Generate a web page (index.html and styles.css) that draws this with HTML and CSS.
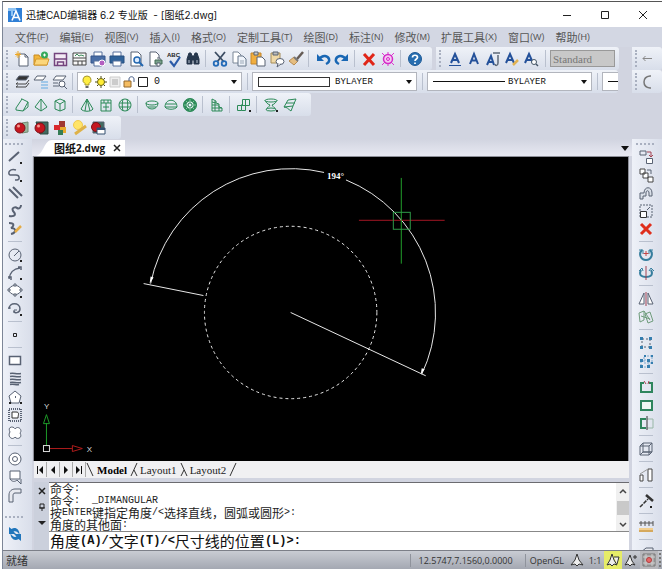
FILE: index.html
```html
<!DOCTYPE html>
<html lang="zh-CN">
<head>
    <meta charset="UTF-8">
    <meta name="viewport" content="width=device-width, initial-scale=1.0">
    <title>迅捷CAD编辑器</title>
    <link rel="stylesheet" href="styles.css">
</head>
<body>
    <div class="app">
        <header class="titlebar">
            <svg class="logo" viewBox="0 0 14 14"><rect width="14" height="14" fill="#2f7fd6"/><path d="M0 0h8v3H5v5H3V3H0z" fill="#8fc4f4"/><path d="M4 12.500L8 3l4 9.500M5.500 9.500h5" fill="none" stroke="#fff" stroke-width="1.600"/></svg>
            <h1>迅捷CAD编辑器 6.2 专业版 &nbsp;- [图纸2.dwg]</h1>
            <div class="window-buttons">
                <button type="button" aria-label="最小化"><svg viewBox="0 0 10 10"><path d="M1 5.500h8"/></svg></button>
                <button type="button" aria-label="最大化"><svg viewBox="0 0 10 10"><path d="M1.500 1.500h7v7h-7z"/></svg></button>
                <button type="button" aria-label="关闭"><svg viewBox="0 0 10 10"><path d="M1 1l8 8M9 1L1 9"/></svg></button>
            </div>
        </header>

        <nav class="menubar">
            <button type="button">文件<small>(F)</small></button>
            <button type="button">编辑<small>(E)</small></button>
            <button type="button">视图<small>(V)</small></button>
            <button type="button">插入<small>(I)</small></button>
            <button type="button">格式<small>(O)</small></button>
            <button type="button">定制工具<small>(T)</small></button>
            <button type="button">绘图<small>(D)</small></button>
            <button type="button">标注<small>(N)</small></button>
            <button type="button">修改<small>(M)</small></button>
            <button type="button">扩展工具<small>(X)</small></button>
            <button type="button">窗口<small>(W)</small></button>
            <button type="button">帮助<small>(H)</small></button>
        </nav>

        <!-- standard toolbar -->
        <div class="toolrow">
            <div class="toolbar standard">
                <i class="grip"></i>
                <button type="button" class="tool" aria-label="新建"><svg viewBox="0 0 18 18"><path d="M6 4h6l3 3v9H6z" fill="#fff"/><path d="M12 4v3h3"/><path d="M5 1v7M2 4.500h6M3 2.500l4 4M7 2.500l-4 4" stroke="#eda723"/></svg></button>
                <button type="button" class="tool" aria-label="打开"><svg viewBox="0 0 18 18"><path d="M2 5h5l1 2h7v8H2z" fill="#f2b63c" stroke="#c88a20"/><path d="M4 9h13l-2 6H2z" fill="#fbd67c" stroke="#d49a30"/><circle cx="12.500" cy="5" r="3.500" fill="#35a95c" stroke="none"/><path d="M11 5h3M12.500 3.500v3" stroke="#fff"/></svg></button>
                <button type="button" class="tool" aria-label="保存"><svg viewBox="0 0 18 18"><path d="M3.500 3.500h12v12h-12z" fill="#f3eaf5" stroke="#73447e" stroke-width="1.500"/><path d="M4 9h11M6.500 15v-3h6v3" stroke="#73447e" stroke-width="1.500"/></svg></button>
                <button type="button" class="tool" aria-label="另存为"><svg viewBox="0 0 18 18"><path d="M3 3h13v12H3z" fill="#f8f8f8" stroke="#444"/><path d="M3 8h13M3 11h13M8 11v4M12 11v4" stroke="#444"/><path d="M5 6l2-2 2 2 2-1 3 1" stroke="#3d8e5c"/></svg></button>
                <button type="button" class="tool" aria-label="打印"><svg viewBox="0 0 18 18"><path d="M5 2h8v5H5z" fill="#fff" stroke="#56719c"/><path d="M2 6h14v7H2z" fill="#496ea6" stroke="#34558a"/><path d="M5 11h8v5H5z" fill="#fff" stroke="#56719c"/><circle cx="13" cy="13" r="3" fill="#b35fc0" stroke="#fff"/></svg></button>
                <button type="button" class="tool" aria-label="快速打印"><svg viewBox="0 0 18 18"><path d="M5 2h8v5H5z" fill="#fff" stroke="#56719c"/><path d="M2 6h14v7H2z" fill="#2f6299" stroke="#274f80"/><path d="M5 11h8v5H5z" fill="#fff" stroke="#56719c"/></svg></button>
                <button type="button" class="tool" aria-label="打印预览"><svg viewBox="0 0 18 18"><path d="M4 2h7l3 3v11H4z" fill="#fff"/><circle cx="10" cy="10" r="3" fill="#dcecff" stroke="#2367b0" stroke-width="1.500"/><path d="M12 12l4 4" stroke="#2367b0" stroke-width="2"/></svg></button>
                <button type="button" class="tool" aria-label="页面设置"><svg viewBox="0 0 18 18"><path d="M4 2h6l3 3v11H4z" fill="#fff"/><path d="M9 10h7v4H9z" fill="#79a08a" stroke="#426a55"/><path d="M11 8h3v2M11 13h3v3h-3z" fill="#fff"/></svg></button>
                <button type="button" class="tool" aria-label="拼写检查"><svg viewBox="0 0 18 18"><text x="2" y="7">ABC</text><path d="M5 11l4 5 6-9" stroke="#2b5ba8" stroke-width="2.200"/></svg></button>
                <button type="button" class="tool" aria-label="查找"><svg viewBox="0 0 18 18"><path d="M5 3h2l1 3h2l1-3h2l2 6v5h-5v-4H8v4H3V9z" fill="#26374d" stroke="#26374d"/><path d="M5 10v3M13 10v3" stroke="#b6c2d0"/></svg></button>
                <i class="sep"></i>
                <button type="button" class="tool" aria-label="剪切"><svg viewBox="0 0 18 18"><path d="M4 2l9 10M14 2L6 12" stroke="#3c4d63" stroke-width="1.800"/><circle cx="5" cy="13.500" r="2.300" stroke="#236bb8" stroke-width="1.800"/><circle cx="13" cy="13.500" r="2.300" stroke="#236bb8" stroke-width="1.800"/></svg></button>
                <button type="button" class="tool" aria-label="复制"><svg viewBox="0 0 18 18"><path d="M3 2h5l3 3v8H3z" fill="#fff" stroke="#7a8797"/><path d="M8 6h5l3 3v7H8z" fill="#eef3fa" stroke="#66768a"/><path d="M10 11h4M10 13h4" stroke="#9aa7b6"/></svg></button>
                <button type="button" class="tool" aria-label="粘贴"><svg viewBox="0 0 18 18"><path d="M2 3h10v11H2z" fill="#f1ae3e" stroke="#c5862a"/><path d="M5 2h4v3H5z" fill="#ccc"/><path d="M8 7h5l3 3v6H8z" fill="#fff"/></svg></button>
                <button type="button" class="tool" aria-label="选择性粘贴"><svg viewBox="0 0 18 18"><path d="M3 3h9v10H3z" fill="#efd8a6" stroke="#a58c58"/><path d="M5 2h5v3H5z" fill="#bbb"/><ellipse cx="12" cy="11.500" rx="4" ry="3" fill="#fff"/><path d="M10 14l-1 3 4-3" fill="#fff"/></svg></button>
                <button type="button" class="tool" aria-label="特性匹配"><svg viewBox="0 0 18 18"><path d="M16 2l-6 7" stroke="#655b55" stroke-width="2.500"/><path d="M7 7l4 4-4 4-5-4z" fill="#e5bd80" stroke="#b88c52"/><path d="M7 7l4 4" stroke="#777" stroke-width="2"/></svg></button>
                <i class="sep"></i>
                <button type="button" class="tool" aria-label="放弃"><svg viewBox="0 0 18 18"><path d="M3 4v7h7z" fill="#1967b4" stroke="none"/><path d="M5 9c4-5 9-3 10 0s-1 4-3 5" stroke="#1967b4" stroke-width="2.500"/></svg></button>
                <button type="button" class="tool" aria-label="重做"><svg viewBox="0 0 18 18"><path d="M15 4v7H8z" fill="#1967b4" stroke="none"/><path d="M13 9C9 4 4 6 3 9s1 4 3 5" stroke="#1967b4" stroke-width="2.500"/></svg></button>
                <i class="sep"></i>
                <button type="button" class="tool" aria-label="删除"><svg viewBox="0 0 18 18"><path d="M4 4l10 11M14 4L4 15" stroke="#e02618" stroke-width="3"/></svg></button>
                <button type="button" class="tool" aria-label="清理"><svg viewBox="0 0 18 18"><path d="M3 3l12 12M15 3L3 15M9 2v14" stroke="#dd35cf"/><circle cx="9" cy="9" r="4.500" fill="#f5c8f2" stroke="#d52bc8" stroke-width="1.500"/><circle cx="9" cy="9" r="1.500" stroke="#d52bc8"/></svg></button>
                <i class="sep"></i>
                <button type="button" class="tool" aria-label="帮助"><svg viewBox="0 0 18 18"><circle cx="9" cy="9" r="6.500" fill="#266db0" stroke="#1d5a97"/><path d="M6.500 7.500c0-3 5-3 5 0 0 1.500-2.500 1.500-2.500 3.500M9 12.500v1.500" stroke="#fff" stroke-width="1.700"/></svg></button>
            </div>
            <div class="toolbar styles">
                <i class="grip"></i>
                <button type="button" class="tool" aria-label="文字样式"><svg viewBox="0 0 18 18"><path d="M5 13L9 4l4 9M6.500 10h5" stroke="#24519a" stroke-width="2"/><path d="M3 15.500h12" stroke="#24519a"/></svg></button>
                <button type="button" class="tool" aria-label="单行文字"><svg viewBox="0 0 18 18"><path d="M5 14L9 4l4 10M6.500 10.500h5" stroke="#24519a" stroke-width="2"/></svg></button>
                <button type="button" class="tool" aria-label="多行文字"><svg viewBox="0 0 18 18"><path d="M3 15L7 6l3 9M4.500 12h5" stroke="#24519a" stroke-width="2"/><path d="M9 3h7M14 5v8c0 3-3 3-3 1" stroke="#5c6878" stroke-width="1.500"/></svg></button>
                <button type="button" class="tool" aria-label="编辑文字"><svg viewBox="0 0 18 18"><path d="M3 13L7 4l4 9M4.500 10h5" stroke="#24519a" stroke-width="2"/><path d="M10 15l5-5" stroke="#e2b352" stroke-width="2.500"/></svg></button>
                <button type="button" class="tool" aria-label="查找文字"><svg viewBox="0 0 18 18"><path d="M3 13L7 4l4 9M4.500 10h5" stroke="#24519a" stroke-width="2"/><circle cx="12" cy="12" r="2.500" fill="#fff" stroke="#456"/><path d="M14 14l2 2" stroke="#456" stroke-width="1.500"/></svg></button>
                <i class="sep wide"></i>
                <select class="style-select" aria-label="样式" disabled><option>Standard</option></select>
            </div>
            <div class="toolbar docked">
                <i class="grip"></i>
                <button type="button" class="tool" aria-label="返回"><svg viewBox="0 0 18 18"><path d="M1 8.500h9M3.500 6L1 8.500 3.500 11" stroke="#888"/></svg></button>
            </div>
        </div>

        <!-- layers and properties -->
        <div class="toolrow">
            <div class="toolbar layers">
                <i class="grip"></i>
                <button type="button" class="tool" aria-label="图层"><svg viewBox="0 0 18 18"><path d="M6 3h10l-3 4H3z" fill="#333"/><path d="M5 9.500L3 11h10l3-4M5 12.500L3 14h10l3-4" stroke="#444"/></svg></button>
                <button type="button" class="tool" aria-label="图层状态"><svg viewBox="0 0 18 18"><path d="M5 3h9l-3 4H2z" fill="#fff"/><path d="M9 9h7M9 12h7M9 15h7" stroke="#8bbde6" stroke-width="1.500"/></svg></button>
                <button type="button" class="tool" aria-label="图层查找"><svg viewBox="0 0 18 18"><path d="M5 3h10l-3 4H2zM2 10h5M2 13h6" fill="#fff"/><circle cx="11" cy="11" r="3" fill="#fff"/><path d="M13 13l3 3"/></svg></button>
                <i class="sep"></i>
                <div class="combo">
                    <svg class="mini" viewBox="0 0 14 14"><path d="M7 1a4 4 0 0 0-2 7.500V10h4V8.500A4 4 0 0 0 7 1z" fill="#ffee42" stroke="#a4952c"/><path d="M5.500 12h3" stroke="#666" stroke-width="2"/></svg>
                    <svg class="mini" viewBox="0 0 14 14"><path d="M7 1v12M1 7h12M3 3l8 8M11 3l-8 8" stroke="#4d4d12"/><circle cx="7" cy="7" r="3.500" fill="#ffed34" stroke="#6d661b"/></svg>
                    <svg class="mini" viewBox="0 0 14 14"><path d="M2 2h10v10H2z" fill="#eee" stroke="#ccc"/><path d="M4 5h6M4 7h6M4 9h6" stroke="#aaa"/></svg>
                    <svg class="mini" viewBox="0 0 14 14"><path d="M2 6h7v6H2z" fill="#f5bd62" stroke="#94682c"/><path d="M7 6V4c0-3 5-3 5 0v3" stroke="#445b86"/></svg>
                    <svg class="mini" viewBox="0 0 14 14"><path d="M2.500 2.500h9v9h-9z" fill="#fff" stroke="#222"/></svg>
                    <select class="layer-name" aria-label="当前图层"><option>0</option></select>
                </div>
                <i class="sep wide"></i>
                <div class="combo">
                    <i class="swatch"></i>
                    <select aria-label="颜色"><option>BYLAYER</option></select>
                </div>
                <i class="sep wide"></i>
                <div class="combo">
                    <i class="linetype"></i>
                    <select aria-label="线型"><option>BYLAYER</option></select>
                </div>
                <i class="sep wide"></i>
                <div class="combo cut"><i class="linetype"></i></div>
            </div>
            <div class="toolbar docked">
                <i class="grip"></i>
                <button type="button" class="tool" aria-label="圆弧"><svg viewBox="0 0 18 18"><path d="M9 3H8C0 4 0 14 8 15h1" stroke="#777" stroke-width="1.500"/></svg></button>
            </div>
        </div>

        <!-- 3D surfaces -->
        <div class="toolrow">
            <div class="toolbar surfaces">
                <i class="grip"></i>
                <button type="button" class="tool" aria-label="楔体"><svg viewBox="0 0 18 18"><path d="M3 12l6-9 6 3-5 9-7-1zM9 3l-1 0M10 15l5-4V6"/></svg></button>
                <button type="button" class="tool" aria-label="棱锥"><svg viewBox="0 0 18 18"><path d="M9 3L3 11l6 4 6-4zM9 3v12"/></svg></button>
                <button type="button" class="tool" aria-label="长方体"><svg viewBox="0 0 18 18"><path d="M9 3l5 2v8l-5 2-5-2V5zM4 5l5 3 5-3M9 8v7"/></svg></button>
                <i class="sep"></i>
                <button type="button" class="tool" aria-label="圆锥"><svg viewBox="0 0 18 18"><path d="M9 3L3 13c2 3 10 3 12 0zM9 3L7 15M9 3l3 12"/></svg></button>
                <button type="button" class="tool" aria-label="圆柱"><svg viewBox="0 0 18 18"><path d="M4 4h10v11H4zM4 7h10M9 7v8M6 11h6M7 4v3M11 4v3"/></svg></button>
                <button type="button" class="tool" aria-label="球体"><svg viewBox="0 0 18 18"><circle cx="9" cy="9" r="6"/><path d="M3.500 7h11M3.500 11h11M7 3c-1 4-1 8 0 12M11 3c1 4 1 8 0 12"/></svg></button>
                <i class="sep"></i>
                <button type="button" class="tool" aria-label="下半球"><svg viewBox="0 0 18 18"><ellipse cx="9" cy="7" rx="6" ry="2"/><path d="M3 7c0 8 12 8 12 0M5 11h8"/></svg></button>
                <button type="button" class="tool" aria-label="上半球"><svg viewBox="0 0 18 18"><path d="M3 11c0-9 12-9 12 0-2 3-10 3-12 0zM4 8h10M3 11h12"/></svg></button>
                <button type="button" class="tool" aria-label="圆环"><svg viewBox="0 0 18 18"><circle cx="9" cy="9" r="5" stroke-width="3"/><path d="M9 2v14M2 9h14M4 4l10 10M14 4L4 14" stroke="#7fc49b"/><circle cx="9" cy="9" r="6.500"/><circle cx="9" cy="9" r="2" fill="#eef"/></svg></button>
                <i class="sep"></i>
                <button type="button" class="tool" aria-label="网格"><svg viewBox="0 0 18 18"><path d="M4 3l4 2v2l3 1v3l3 1v3H4zM7 5v10M11 10v5M4 6l4 1M4 9h7M4 12h10"/></svg></button>
                <i class="sep"></i>
                <button type="button" class="tool" aria-label="面"><svg viewBox="0 0 18 18"><path d="M7.500 3.500h7v6h-7zM2.500 9.500h8v5h-4M2.500 9.500v5h4v-5l1-2M10.500 3.500v6"/><path d="M14 14h2v2h-2z" fill="#222" stroke="none"/></svg></button>
                <i class="sep"></i>
                <button type="button" class="tool" aria-label="旋转曲面"><svg viewBox="0 0 18 18"><path d="M8 9C5 8 4 6 3 4.500M10 9c3-1 4-3 5-4.500M8 9c-1 2-3 3-4 4.500M10 9c1 2 3 3 4 4.500"/><ellipse cx="9" cy="4.500" rx="6" ry="1.500"/><ellipse cx="9" cy="13.500" rx="5" ry="1.500"/><path d="M14 14h2v2h-2z" fill="#222" stroke="none"/></svg></button>
                <button type="button" class="tool" aria-label="平移曲面"><svg viewBox="0 0 18 18"><path d="M7 4l8-1-3 7-9 1zM12 10l-2 5M3 11c3 0 4 2 7 4M5 7h9"/></svg></button>
            </div>
        </div>

        <!-- rendering -->
        <div class="toolrow">
            <div class="toolbar render">
                <i class="grip"></i>
                <button type="button" class="tool" aria-label="消隐"><svg viewBox="0 0 18 18"><path d="M9 4l6-1v10l-6 1z" fill="#9ab79d" stroke="#718a73"/><circle cx="7" cy="9" r="5" fill="#c51720" stroke="#7d1118"/><circle cx="5.500" cy="7" r="1.500" fill="#f39a90" stroke="none"/></svg></button>
                <button type="button" class="tool" aria-label="着色"><svg viewBox="0 0 18 18"><path d="M4 3h12v12H8z" fill="#426b60" stroke="#2d4c44"/><circle cx="8" cy="9" r="5" fill="#c51720" stroke="#7d1118"/><circle cx="6.500" cy="7" r="1.500" fill="#f39a90" stroke="none"/></svg></button>
                <button type="button" class="tool" aria-label="材质"><svg viewBox="0 0 18 18"><g stroke="none"><path d="M8 2h6v7H8z" fill="#a03832"/><path d="M3 6h6v5H3z" fill="#d9272b"/><path d="M9 8h6v6H9z" fill="#e8aa2f"/><path d="M7 11h5v5H7z" fill="#357c55"/></g></svg></button>
                <button type="button" class="tool" aria-label="光源"><svg viewBox="0 0 18 18"><circle cx="8" cy="6" r="4.500" fill="#ffe468" stroke="#f0c94e"/><path d="M5 15L16 7" stroke="#deb249" stroke-width="3"/></svg></button>
                <button type="button" class="tool" aria-label="渲染"><svg viewBox="0 0 18 18"><path d="M4 3h11v11H4z" fill="#426b60"/><circle cx="7" cy="8" r="4.500" fill="#c51720" stroke="#7d1118"/><path d="M8 9h8v6H8z" fill="#fff" stroke="#345071"/><path d="M8 10h8" stroke="#345071" stroke-width="2"/></svg></button>
            </div>
        </div>

        <main class="workspace">
            <div class="sidebar left">
                <i class="grip"></i>
                <button type="button" class="tool" aria-label="直线"><svg viewBox="0 0 18 18"><path d="M3 13L13 4" stroke-width="2"/><path class="more" d="M14 14h2v2h-2z"/></svg></button>
                <button type="button" class="tool" aria-label="多段线"><svg viewBox="0 0 18 18"><path d="M10 4C4 2 1 7 4 9h6c4 0 4 5 1 5H9" stroke-width="1.500"/><path class="more" d="M14 14h2v2h-2z"/></svg></button>
                <button type="button" class="tool" aria-label="多线"><svg viewBox="0 0 18 18"><path d="M3 5l9 9M7 3l9 9" stroke-width="2"/></svg></button>
                <button type="button" class="tool" aria-label="样条曲线"><svg viewBox="0 0 18 18"><path d="M3 14c7 1 7-2 4-5-2-4 3-4 4-3 2 1 4 0 4-3" stroke-width="2"/></svg></button>
                <button type="button" class="tool" aria-label="徒手画"><svg viewBox="0 0 18 18"><path d="M3 3c7 0 4 4 2 5 6 0 5 5 0 6" stroke-width="2"/><path d="M9 12l6-6" stroke="#e4ac45" stroke-width="2.500"/></svg></button>
                <i class="sep"></i>
                <button type="button" class="tool" aria-label="圆"><svg viewBox="0 0 18 18"><circle cx="9" cy="9" r="6"/><path d="M8 10l5-5"/><path class="more" d="M14 14h2v2h-2z"/></svg></button>
                <button type="button" class="tool" aria-label="圆弧"><svg viewBox="0 0 18 18"><path d="M3 15C4 8 7 5 14 4M2 13h3v3M12 3h3v3" stroke-width="1.500"/><path class="more" d="M14 14h2v2h-2z"/></svg></button>
                <button type="button" class="tool" aria-label="椭圆"><svg viewBox="0 0 18 18"><ellipse cx="9" cy="8" rx="6" ry="4.500" fill="#fff"/><path d="M2 7h2v2H2zM8 2h2v2H8zM14 7h2v2h-2zM8 12h2v2H8z" fill="#fff"/><path class="more" d="M14 14h2v2h-2z"/></svg></button>
                <button type="button" class="tool" aria-label="椭圆弧"><svg viewBox="0 0 18 18"><path d="M3 9c0-7 11-7 11 0 0 4-6 5-6 2" stroke-width="1.500"/><path d="M2 8h3M8 13v-3h3"/><path class="more" d="M14 14h2v2h-2z"/></svg></button>
                <i class="sep"></i>
                <button type="button" class="tool" aria-label="点"><svg viewBox="0 0 18 18"><path d="M7.500 7.500h3v3h-3z" stroke="#222"/></svg></button>
                <i class="sep"></i>
                <button type="button" class="tool" aria-label="矩形"><svg viewBox="0 0 18 18"><path d="M3.500 4.500h11v8h-11z" fill="#fff" stroke-width="1.500"/></svg></button>
                <button type="button" class="tool" aria-label="填充"><svg viewBox="0 0 18 18"><path d="M4 3.500c4-1 6 1 11 0M4 6.500c4-1 6 1 11 0M4 9.500c4-1 6 1 11 0M4 12.500c4-1 6 1 11 0M4 14.500c4-1 6 1 9 0" stroke-width="1.500"/></svg></button>
                <button type="button" class="tool" aria-label="多边形"><svg viewBox="0 0 18 18"><path d="M9 3l6 5-2 7H5L3 8z" fill="#fff"/><path d="M9 9h1" stroke-width="2"/><path class="more" d="M14 14h2v2h-2zM3 14h2v2H3z"/></svg></button>
                <button type="button" class="tool" aria-label="边界"><svg viewBox="0 0 18 18"><path d="M3 3h12v12H3z" stroke-width="2" stroke-dasharray="1 1"/><path d="M6 6h4c4 0 2 3 2 6H6z" fill="#fff" stroke="#333"/></svg></button>
                <button type="button" class="tool" aria-label="修订云线"><svg viewBox="0 0 18 18"><path d="M4 8c-3-6 4-6 5-3 3-4 8 1 5 4 3 5-3 7-5 4-3 4-8-1-5-5z" fill="#fff"/></svg></button>
                <i class="sep"></i>
                <button type="button" class="tool" aria-label="圆环"><svg viewBox="0 0 18 18"><circle cx="9" cy="9" r="6" fill="#fff"/><circle cx="9" cy="9" r="2.500"/></svg></button>
                <button type="button" class="tool" aria-label="区域覆盖"><svg viewBox="0 0 18 18"><path d="M4 3h10v8H4z" fill="#fff"/><path d="M4 11c2 3 5 3 7 1l4 4v-5"/></svg></button>
                <button type="button" class="tool" aria-label="圆角"><svg viewBox="0 0 18 18"><path d="M3 16V9c0-4 3-6 6-6h6v4H9c-2 0-2 2-2 3v6z" fill="#e8eaf0"/></svg></button>
                <i class="grip lower"></i>
                <button type="button" class="tool" aria-label="刷新"><svg viewBox="0 0 18 18"><path d="M3 2v7h7L7.500 6.500c2-1 4 0 6 3 0-5-4-8-8-5.500zM15 16V9H8l2.500 2.500c-2 1-4 0-6-3 0 5 4 8 8 5.500z" fill="#2075bb" stroke="none"/></svg></button>
            </div>

            <section class="document">
                <div class="doc-tabs">
                    <svg class="tab-slope" viewBox="0 0 16 16"><path d="M0 16C8 14 8 0 16 0v16z"/></svg>
                    <div class="doc-tab">
                        <button type="button" class="doc-name">图纸<span>2.dwg</span></button>
                        <button type="button" class="doc-close" aria-label="关闭图纸"><svg viewBox="0 0 8 8"><path d="M1 1l6 6M7 1L1 7"/></svg></button>
                    </div>
                    <button type="button" class="doc-list" aria-label="图纸列表"></button>
                </div>

                <div class="canvas">
                    <svg viewBox="1 0 594 305" preserveAspectRatio="xMinYMax meet">
                        <g fill="none" stroke="#e8e8e8">
                            <path d="M118 127A144 144 0 0 1 292 15.500"/>
                            <path d="M314 23A144 144 0 0 1 390 218"/>
                            <circle cx="258.500" cy="156" r="86.500" stroke-dasharray="3 3"/>
                            <path d="M111 127l60 12M258.500 156L394 219.500"/>
                        </g>
                        <path d="M117 127l1-7 3 1zM389 218l1-6 3 1z" fill="#fff"/>
                        <text class="angle" x="295" y="22">194°</text>
                        <path d="M327 63.500h86" stroke="#a51624"/>
                        <path d="M369.500 21v86" stroke="#22a02c"/>
                        <rect x="361.500" y="55.500" width="17" height="17" fill="none" stroke="#2f9a48"/>
                        <!-- UCS icon -->
                        <path d="M13.500 290v-23M10.500 267.500h6l-3-9z" fill="none" stroke="#1d9a28"/>
                        <path d="M17 292.500h22M39.500 289.500v6l10-3z" fill="none" stroke="#b01c1c"/>
                        <rect x="10.500" y="289.500" width="6" height="6" fill="none" stroke="#ddd"/>
                        <text class="axis" x="11" y="253">Y</text>
                        <text class="axis" x="54" y="296">X</text>
                    </svg>
                </div>

                <div class="layout-tabs">
                    <button type="button" class="nav" aria-label="第一个"><svg viewBox="0 0 8 8"><path d="M1 0h1v8H1zM7 0v8L3 4z"/></svg></button>
                    <button type="button" class="nav" aria-label="上一个"><svg viewBox="0 0 8 8"><path d="M6 0v8L2 4z"/></svg></button>
                    <button type="button" class="nav" aria-label="下一个"><svg viewBox="0 0 8 8"><path d="M2 0v8l4-4z"/></svg></button>
                    <button type="button" class="nav" aria-label="最后一个"><svg viewBox="0 0 8 8"><path d="M6 0h1v8H6zM1 0v8l4-4z"/></svg></button>
                    <svg class="edge" viewBox="0 0 9 14"><path d="M1 0l6 13"/></svg>
                    <button type="button" class="layout active">Model</button>
                    <svg class="edge" viewBox="0 0 9 14"><path d="M8 0L2 13M5 7l3 6"/></svg>
                    <button type="button" class="layout">Layout1</button>
                    <svg class="edge" viewBox="0 0 9 14"><path d="M5 7L2 13M2 0l6 13"/></svg>
                    <button type="button" class="layout">Layout2</button>
                    <svg class="edge" viewBox="0 0 9 14"><path d="M8 0L2 13"/></svg>
                </div>

                <div class="command">
                    <div class="command-side">
                        <button type="button" aria-label="关闭命令栏"><svg viewBox="0 0 8 8"><path d="M1 1l6 6M7 1L1 7" fill="none" stroke="#222" stroke-width="1.500"/></svg></button>
                        <button type="button" aria-label="固定"><svg viewBox="0 0 8 8"><path d="M2 1h4v4H2zM1 5h6M4 5v3" fill="none" stroke="#222"/></svg></button>
                        <button type="button" aria-label="选项"><svg viewBox="0 0 8 8"><path d="M0 2h8L4 6z" fill="#222"/></svg></button>
                    </div>
                    <div class="command-body">
                        <div class="history">
                            <div class="log">
                                <p>命令<code>:</code></p>
                                <p>命令<code>: &nbsp;_DIMANGULAR</code></p>
                                <p>按<code>ENTER</code>键指定角度<code>/&lt;</code>选择直线，圆弧或圆形<code>&gt;:</code></p>
                                <p>角度的其他面<code>:</code></p>
                            </div>
                            <div class="scroller">
                                <button type="button" aria-label="向上"><svg viewBox="0 0 8 8"><path d="M1 6l3-3 3 3"/></svg></button>
                                <i class="thumb"></i>
                                <button type="button" aria-label="向下"><svg viewBox="0 0 8 8"><path d="M1 2l3 3 3-3"/></svg></button>
                            </div>
                        </div>
                        <div class="prompt">
                            <label for="commandInput">角度<code>(A)/</code>文字<code>(T)/&lt;</code>尺寸线的位置<code>(L)&gt;:</code></label>
                            <input type="text" id="commandInput">
                        </div>
                    </div>
                </div>
            </section>

            <div class="sidebar right">
                <i class="grip"></i>
                <button type="button" class="tool" aria-label="复制对象"><svg viewBox="0 0 18 18"><path d="M3 3h6v4H3z"/><path d="M9.500 10.500h6v5h-6z" fill="#fff"/><path d="M10 4h4v5M12 7l2 2 2-2" stroke="#a34352"/></svg></button>
                <button type="button" class="tool" aria-label="多重复制"><svg viewBox="0 0 18 18"><path d="M3 3h5v5H3zM6 7h5v5H6zM11 11h5v5h-5z" fill="#fff" stroke="#444"/><path d="M10 4h4v4"/></svg></button>
                <button type="button" class="tool" aria-label="偏移"><svg viewBox="0 0 18 18"><path d="M3 15V9h4c0-7 8-7 8 0v3h-3V9c0-3-3-3-3 0v3H6v3z" fill="#d9dfe8"/></svg></button>
                <button type="button" class="tool" aria-label="缩放"><svg viewBox="0 0 18 18"><path d="M3 3h12v12H3z" stroke-dasharray="2 1"/><path d="M3.500 9.500h6v6h-6z" fill="#fff" stroke="#333"/><path d="M10 8l3-3"/></svg></button>
                <button type="button" class="tool" aria-label="删除对象"><svg viewBox="0 0 18 18"><path d="M4 4l10 10M14 4L4 14" stroke="#df2e1c" stroke-width="3"/></svg></button>
                <i class="sep"></i>
                <button type="button" class="tool" aria-label="旋转"><svg viewBox="0 0 18 18"><path d="M5 4c-4 4-1 10 4 10s8-6 4-10" stroke="#367e9e" stroke-width="2"/><path d="M2 4h4v4M16 4h-4v4" stroke="#367e9e"/><path d="M9 5v5M6.500 7.500h5" stroke="#c34545"/></svg></button>
                <button type="button" class="tool" aria-label="三维旋转"><svg viewBox="0 0 18 18"><path d="M4 6c-3 6 2 7 5 7s8-1 5-7" stroke="#367e9e" stroke-width="2"/><path d="M2 7l3-3 1 3M12 7l2-3 3 3" stroke="#367e9e"/><path d="M9 2v14" stroke="#a34352"/></svg></button>
                <i class="sep"></i>
                <button type="button" class="tool" aria-label="镜像"><svg viewBox="0 0 18 18"><path d="M7 3v11H2zM11 3v11h5z" fill="#fff"/><path d="M9 2v14" stroke="#a34352"/></svg></button>
                <button type="button" class="tool" aria-label="三维镜像"><svg viewBox="0 0 18 18"><path d="M2 5l5-2v9l-4 2zM16 13l-3-9-5 2 3 9zM4 8l9 3M7 3l6 9" stroke="#6f9c7c"/></svg></button>
                <i class="sep"></i>
                <button type="button" class="tool" aria-label="阵列"><svg viewBox="0 0 18 18"><path d="M5 5h8v8H5z" stroke-dasharray="2 2"/><path d="M3 3h3v3H3zM12 3h3v3h-3zM3 12h3v3H3zM12 12h3v3h-3z" fill="#357eaf" stroke="none"/></svg></button>
                <button type="button" class="tool" aria-label="三维阵列"><svg viewBox="0 0 18 18"><path d="M4 8h8v7H4zM7 4h8v7H7z" stroke="#7ca9cf" stroke-dasharray="2 1"/><path d="M3 7h3v3H3zM10 7h3v3h-3zM3 13h3v3H3zM10 13h3v3h-3zM7 3h2v2H7zM14 3h2v2h-2zM14 10h2v2h-2z" fill="#357eaf" stroke="none"/></svg></button>
                <i class="sep"></i>
                <button type="button" class="tool" aria-label="打断"><svg viewBox="0 0 18 18"><path d="M7 5H4v9h11V5h-3" stroke="#2f855d" stroke-width="2"/><path d="M7 3l2 3M12 3l-1 3" stroke="#a34352"/></svg></button>
                <button type="button" class="tool" aria-label="合并"><svg viewBox="0 0 18 18"><path d="M4 5h11v9H4z" fill="#eef8f1" stroke="#2f855d" stroke-width="2"/></svg></button>
                <button type="button" class="tool" aria-label="修剪"><svg viewBox="0 0 18 18"><path d="M10 5h6v9h-6" stroke="#98b7a6"/><path d="M9 5H4v9h5" stroke="#2f855d" stroke-width="2"/><path d="M10 2v14" stroke="#333"/></svg></button>
                <i class="sep"></i>
                <button type="button" class="tool" aria-label="拉伸"><svg viewBox="0 0 18 18"><path d="M6 3h9v9H6zM3 6h9v9H3zM3 6l3-3M12 6l3-3M3 15l3-3h9l-3 3"/></svg></button>
                <i class="sep"></i>
                <button type="button" class="tool" aria-label="拉长"><svg viewBox="0 0 18 18"><path d="M3 9h3v6H3zM11 3h4v12h-4z" fill="#fff" stroke="#444"/><path d="M3 8l8-5" stroke="#999"/></svg></button>
                <i class="sep"></i>
                <button type="button" class="tool" aria-label="分解"><svg viewBox="0 0 18 18"><path d="M9 3l7 6" stroke="#333" stroke-width="2.500"/><path d="M3 15l8-8" stroke="#333" stroke-width="1.500" stroke-dasharray="4 1"/><path class="more" d="M13 14h2v2h-2z"/></svg></button>
                <i class="sep"></i>
                <button type="button" class="tool" aria-label="测量"><svg viewBox="0 0 18 18"><path d="M2 5h14M4 3v5M8 3v5M12 3v5M16 3v5" stroke="#555"/><path d="M2 10h14v4H2z" fill="#f3cf8f" stroke="none"/><path d="M2 13h14" stroke="#b8832d"/></svg></button>
                <i class="sep"></i>
                <button type="button" class="tool" aria-label="倒角"><svg viewBox="0 0 18 18"><path d="M3 16V9l6-5h7v4h-5l-4 4v4z" fill="#e8eaf0"/></svg></button>
            </div>
        </main>

        <footer class="statusbar">
            <span class="ready">就绪</span>
            <span class="coords">12.5747,7.1560,0.0000</span>
            <span class="renderer">OpenGL</span>
            <button type="button" aria-label="注释"><svg viewBox="0 0 14 14"><path d="M7 1l2 6 4 5-4-1-2 2-2-2-4 1 4-5z"/></svg></button>
            <button type="button" class="scale">1:1</button>
            <button type="button" class="lit" aria-label="注释可见性"><svg viewBox="0 0 14 14"><path d="M6 1l2 6 3 5-3-1-2 2-2-2-3 1 3-5zM8 4h5l-2 7"/></svg></button>
            <button type="button" aria-label="自动缩放"><svg viewBox="0 0 14 14"><path d="M6 2l2 6 3 4-3-1-2 2-2-2-3 1 3-5zM9 4h4M11 2v4"/></svg></button>
            <button type="button" class="snap" aria-label="捕捉"><svg viewBox="0 0 14 14"><path d="M1 1h12v12H1z" fill="#aaa" stroke="#777"/><path d="M1 4h12M4 1v12M10 1v12M1 10h12" stroke="#ccc"/><circle cx="7" cy="7" r="2.500" fill="#e6696a" stroke="#b43d3d"/></svg></button>
            <i class="resize"></i>
        </footer>
    </div>
</body>
</html>
```
FILE: styles.css
```css
* {
    box-sizing: border-box;
}
body {
    margin: 0;
    padding: 1px 3px 4px 2px;
    height: 100vh;
    background-color: #fff;
    font-family: "Open Sans", "Noto Sans CJK SC", sans-serif;
    font-size: 11px;
    color: #333;
}
.app {
    display: flex;
    flex-direction: column;
    height: 100%;
    border-top: 1px solid #555;
    border-left: 1px solid #7d8697;
    background-color: #d1d4e0;
    overflow: hidden;
}
button {
    display: flex;
    justify-content: center;
    align-items: center;
    margin: 0;
    padding: 0;
    border: none;
    background: none;
    font: inherit;
    color: inherit;
    white-space: nowrap;
}
svg {
    display: block;
    flex: none;
}

/* title and menu */
.titlebar {
    display: flex;
    align-items: center;
    flex: none;
    height: 25px;
    padding-left: 5px;
    background-color: #fff;
}
.logo {
    width: 14px;
    height: 14px;
}
.titlebar h1 {
    flex: 1;
    margin: 0 0 0 4px;
    font-family: Inter, "Noto Sans CJK SC", sans-serif;
    font-size: 10px;
    font-weight: normal;
    color: #111;
    white-space: nowrap;
}
.window-buttons {
    display: flex;
}
.window-buttons button {
    width: 38px;
    height: 25px;
}
.window-buttons svg {
    width: 10px;
    height: 10px;
    fill: none;
    stroke: #222;
}
.menubar {
    display: flex;
    align-items: center;
    flex: none;
    gap: 11px;
    height: 20px;
    padding-left: 12px;
    background-color: #d3d7e3;
    color: #555;
}
.menubar small {
    font-family: "Liberation Sans", Arial, sans-serif;
    font-size: 9px;
}

/* toolbars */
.toolrow {
    display: flex;
    flex: none;
    height: 23px;
}
.toolbar {
    display: flex;
    align-items: center;
    height: 23px;
    border-radius: 0 3px 3px 0;
    background: linear-gradient(#eff2f8, #d8deea);
}
.standard {
    padding-right: 8px;
    margin-right: 4px;
}
.styles {
    padding-right: 4px;
}
.docked {
    width: 30px;
    margin-left: auto;
}
.layers {
    flex: 0 1 615px;
}
.surfaces {
    padding-right: 12px;
}
.render {
    padding-right: 14px;
}
.grip {
    flex: none;
    width: 3px;
    height: 17px;
    margin: 0 3px;
    border-left: 2px dotted #a9b0c0;
}
.sep {
    flex: none;
    width: 1px;
    height: 17px;
    margin: 0 4px 0 3px;
    background-color: #b9c0ce;
}
.sep.wide {
    margin: 0 4px 0 5px;
}
.tool {
    flex: none;
    width: 19px;
    height: 18px;
}
.tool svg {
    width: 18px;
    height: 18px;
    fill: none;
    stroke: #596273;
}
.tool text {
    font: bold 6px "Liberation Sans", Arial, sans-serif;
    fill: #222;
    stroke: none;
}
.tool .more {
    fill: #222;
    stroke: none;
}
.surfaces .tool svg {
    stroke: #2c8a58;
}
select {
    appearance: none;
    min-width: 0;
    padding: 0;
    border: none;
    border-radius: 0;
    background: none;
    font-family: "Liberation Mono", monospace;
    font-size: 9px;
    color: #111;
    opacity: 1;
}
.style-select {
    width: 65px;
    height: 17px;
    padding-left: 2px;
    border: 1px solid #999;
    background-color: #c8c8c8;
    font-family: "Liberation Serif", serif;
    font-size: 11px;
    color: #777;
}
.style-select:disabled {
    opacity: 1;
}
.combo {
    display: flex;
    align-items: center;
    flex: 0 1 165px;
    height: 19px;
    padding: 0 4px 0 2px;
    border: 1px solid #b2b5bd;
    background-color: #fff;
}
.combo::after {
    content: "";
    border: 3px solid transparent;
    border-top: 4px solid #111;
    border-bottom: none;
}
.combo select {
    flex: 1;
    height: 17px;
}
.combo .layer-name {
    padding-left: 4px;
    font-size: 10px;
}
.mini {
    width: 14px;
    height: 14px;
    fill: none;
}
.swatch {
    width: 72px;
    height: 10px;
    margin: 0 5px 0 3px;
    border: 1px solid #333;
}
.linetype {
    width: 72px;
    height: 1px;
    margin: 0 3px;
    background-color: #111;
}
.cut {
    flex: 0 0 16px;
    min-width: 0;
    padding-right: 0;
    border-right: none;
    overflow: hidden;
}
.cut .linetype {
    margin-right: 0;
}
.cut::after {
    display: none;
}

/* work area */
.workspace {
    display: flex;
    flex: 1;
    min-height: 0;
}
.sidebar {
    display: flex;
    flex-direction: column;
    flex: none;
    overflow: hidden;
    background: linear-gradient(to right, #eef1f8, #d9deea);
}
.sidebar.left {
    width: 29px;
    padding-left: 2px;
}
.sidebar.right {
    width: 30px;
    padding-left: 4px;
}
.sidebar .grip {
    width: 18px;
    height: 2px;
    margin: 4px 0 3px;
    border-left: none;
    border-top: 2px dotted #a9b0c0;
}
.sidebar .grip.lower {
    margin: 12px 0 7px;
}
.sidebar .sep {
    width: 14px;
    height: 1px;
    margin: 3px 0 4px 3px;
}
.document {
    display: flex;
    flex-direction: column;
    flex: 1;
    min-width: 0;
}
.doc-tabs {
    display: flex;
    align-items: flex-end;
    flex: none;
    height: 17px;
    padding: 0 3px 0 4px;
    background: linear-gradient(#d1d4e0, #e8e9f2);
}
.tab-slope {
    width: 16px;
    height: 16px;
    fill: #fff;
}
.doc-tab {
    display: flex;
    align-items: center;
    gap: 8px;
    height: 16px;
    padding: 0 4px 0 2px;
    background-color: #fff;
    color: #111;
}
.doc-name {
    font-weight: bold;
    font-size: 11px;
}
.doc-name span {
    font-family: "Open Sans", sans-serif;
    font-size: 10px;
}
.doc-close svg {
    width: 8px;
    height: 8px;
    stroke: #222;
    stroke-width: 1.5;
}
.doc-list {
    width: 8px;
    height: 16px;
    margin-left: auto;
}
.doc-list::after {
    content: "";
    border: 4px solid transparent;
    border-top: 5px solid #111;
    border-bottom: none;
}
.canvas {
    flex: 1;
    min-height: 0;
    margin: 0 3px 0 1px;
    border: 1px solid #8d8f98;
    border-bottom: none;
    background-color: #000;
}
.canvas svg {
    width: 100%;
    height: 100%;
}
.angle {
    font: bold 9px "Liberation Serif", serif;
    fill: #fff;
}
.axis {
    font: 8px "Liberation Sans", Arial, sans-serif;
    fill: #ddd;
}
.layout-tabs {
    display: flex;
    align-items: center;
    flex: none;
    height: 17px;
    margin: 0 3px 0 2px;
    background-color: #f0f0f2;
    font-family: "Liberation Serif", serif;
    font-size: 11px;
    color: #222;
}
.nav {
    width: 13px;
    height: 15px;
    border-right: 1px solid #aaa;
}
.nav svg {
    width: 8px;
    height: 8px;
    fill: #111;
}
.edge {
    width: 9px;
    height: 14px;
    fill: none;
    stroke: #333;
}
.layout {
    padding: 0 2px;
}
.layout.active {
    font-weight: bold;
    color: #000;
}

/* command window */
.command {
    display: flex;
    flex: none;
    margin-top: 4px;
    padding: 0 3px 0 2px;
}
.command-side {
    display: flex;
    flex-direction: column;
    gap: 8px;
    width: 15px;
    padding-top: 5px;
    background-color: #cbd0dc;
}
.command-side svg,
.scroller svg {
    width: 8px;
    height: 8px;
}
.command-body {
    flex: 1;
    min-width: 0;
    border-top: 1px solid #6b6b70;
    background-color: #fff;
    color: #222;
}
.history {
    display: flex;
    height: 49px;
    border-bottom: 1px solid #888;
}
.log {
    flex: 1;
    padding-left: 1px;
    font-family: "Noto Sans CJK SC", sans-serif;
    font-size: 12px;
    line-height: 12px;
}
.log p {
    display: flex;
    align-items: center;
    height: 12px;
    margin: 0;
    white-space: nowrap;
}
code {
    font-family: "Liberation Mono", monospace;
    font-size: 10px;
}
.scroller {
    display: flex;
    flex-direction: column;
    justify-content: space-between;
    align-items: center;
    width: 13px;
    padding: 4px 0 2px;
    background-color: #f0f0f0;
}
.scroller svg {
    fill: none;
    stroke: #444;
    stroke-width: 1.5;
}
.thumb {
    width: 12px;
    height: 14px;
    background-color: #c9c9c9;
}
.prompt {
    display: flex;
    align-items: center;
    height: 18px;
    padding-left: 1px;
}
.prompt label {
    display: flex;
    align-items: center;
    height: 18px;
    font-family: "Noto Sans CJK SC", sans-serif;
    font-size: 15px;
    line-height: 18px;
    color: #111;
    white-space: nowrap;
}
.prompt code {
    font-size: 12px;
    font-weight: bold;
}
.prompt input {
    flex: 1;
    min-width: 0;
    height: 16px;
    padding: 0;
    border: none;
    outline: none;
    font-size: 12px;
}

/* status bar */
.statusbar {
    display: flex;
    align-items: center;
    flex: none;
    height: 19px;
    padding-right: 1px;
    border-top: 1px solid #7c7f88;
    background: linear-gradient(#c9ccd3, #a4a8b2);
    font-size: 9px;
    color: #333;
}
.ready {
    flex: 1;
    padding-left: 3px;
    font-size: 11px;
}
.coords {
    padding: 0 12px 0 8px;
    border-left: 1px solid #8f939c;
}
.renderer {
    padding: 0 4px;
    border-left: 1px solid #8f939c;
}
.statusbar button {
    width: 18px;
    height: 18px;
}
.statusbar svg {
    width: 14px;
    height: 14px;
    fill: #eee;
    stroke: #333;
}
.statusbar .lit {
    background-color: #e6ec68;
}
.statusbar .snap {
    background-color: #b8b8bc;
}
.resize {
    width: 3px;
    height: 14px;
    border-right: 2px dotted #777;
}
```
